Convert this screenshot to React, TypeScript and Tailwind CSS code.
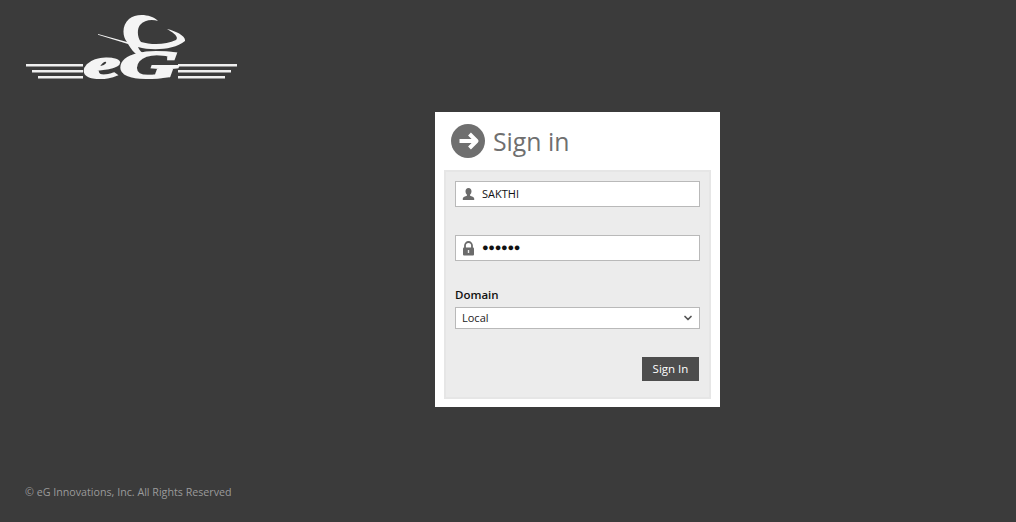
import { ChevronDown } from "lucide-react";

function Logo() {
  return (
    <svg width="214" height="80" viewBox="0 0 214 80" className="block">
      {/* swoosh */}
      <path
        d="M134 7C127 0 112-1 105 5C98 11 98 22 103 28L74 20L74 20.800L104 30C107 35 110 39 114 41L122 41C118 39 115 36 114 33C128 37 150 36 161 27C162 22 152 17 143 15C150 19 155 23 152 26C142 31 127 31 117 28C113 23 113 15 116 11C120 6 128 5 134 7Z"
        fill="#f4f4f4"
      />
      {/* speed lines */}
      <g fill="#efefef">
        <rect x="2" y="50" width="57" height="2.500" />
        <rect x="8" y="56" width="51" height="2.500" />
        <rect x="14" y="62" width="45" height="2.500" />
        <rect x="154" y="50" width="59" height="2.500" />
        <rect x="154" y="56" width="53" height="2.500" />
        <rect x="154" y="62" width="47" height="2.500" />
      </g>
      <text
        x="60"
        y="64"
        fill="#f4f4f4"
        stroke="#f4f4f4"
        strokeWidth="2.200"
        fontFamily="'Liberation Serif', serif"
        fontSize="41"
        fontStyle="italic"
        fontWeight="700"
        textLength="94"
        lengthAdjust="spacingAndGlyphs"
      >
        eG
      </text>
    </svg>
  );
}

function ArrowBadge() {
  return (
    <svg width="34" height="34" viewBox="0 0 34 34" className="shrink-0">
      <circle cx="17" cy="17" r="17" fill="#6f6f6f" />
      <path d="M8.500 17H24M18.500 10L25.500 17L18.500 24" fill="none" stroke="#ffffff" strokeWidth="4" strokeLinejoin="round" />
    </svg>
  );
}

function UserGlyph() {
  return (
    <svg width="13" height="13" viewBox="0 0 13 13" className="shrink-0">
      <path
        d="M6.500 0C4.600 0 3.500 1.300 3.500 3.200c0 1.400.6 2.700 1.400 3.400v1.100C3.400 8.400.8 9 .8 10.600V12h11.400v-1.400c0-1.600-2.600-2.200-4.100-2.900V6.600c.8-.7 1.400-2 1.400-3.400C9.500 1.300 8.400 0 6.500 0z"
        fill="#6b6b6b"
      />
    </svg>
  );
}

function LockGlyph() {
  return (
    <svg width="13" height="15" viewBox="0 0 13 15" className="shrink-0">
      <path d="M3 7V4.500a3.500 3.500 0 0 1 7 0V7" fill="none" stroke="#6b6b6b" strokeWidth="1.800" />
      <rect x="1" y="6.500" width="11" height="8" rx="1" fill="#6b6b6b" />
      <rect x="5.800" y="9" width="1.400" height="3" fill="#ececec" />
    </svg>
  );
}

export default function App() {
  return (
    <div className="flex h-[522px] flex-col overflow-hidden bg-[#3b3b3b] font-['Open_Sans','Liberation_Sans',sans-serif]">
      <header className="h-[112px] pt-[14px] pl-[24px]">
        <Logo />
      </header>

      <main className="ml-[435px] h-[295px] w-[285px] bg-white px-[9px] pb-[8px]">
        <div className="flex h-[58px] items-center gap-[8px] pl-[7px]">
          <ArrowBadge />
          <h1 className="text-[24.800px] leading-none text-[#6f6f6f]">Sign in</h1>
        </div>

        <form className="flex h-[229px] flex-col border-2 border-[#e6e6e6] bg-[#ececec] px-[9px] pt-[9px]">
          <div className="flex h-[26px] items-center gap-[7px] border border-[#b9b9b9] bg-white pl-[6px]">
            <UserGlyph />
            <span className="text-[11px] text-[#111]">SAKTHI</span>
          </div>

          <div className="mt-[28px] flex h-[26px] items-center gap-[7px] border border-[#b9b9b9] bg-white pl-[6px]">
            <LockGlyph />
            <span className="pb-[3px] text-[11px] leading-none tracking-[-0.3px] text-[#111]">●●●●●●</span>
          </div>

          <label className="mt-[25px] h-[18px] text-[11.500px] leading-[18px] font-semibold text-[#111]">Domain</label>

          <div className="mt-[3px] flex h-[22px] items-center justify-between border border-[#b9b9b9] bg-white pr-[5px] pl-[6px]">
            <span className="text-[11px] text-[#222]">Local</span>
            <ChevronDown size={12} strokeWidth={3.500} color="#555" />
          </div>

          <div className="mt-[28px] flex justify-end pr-[1px]">
            <button type="button" className="h-[24px] w-[57px] bg-[#4d4d4d] text-[11.500px] text-white">
              Sign In
            </button>
          </div>
        </form>
      </main>

      <footer className="mt-[78px] pl-[25px] text-[10.700px] leading-[14px] text-[#9a9a9a]">
        © eG Innovations, Inc. All Rights Reserved
      </footer>
    </div>
  );
}
